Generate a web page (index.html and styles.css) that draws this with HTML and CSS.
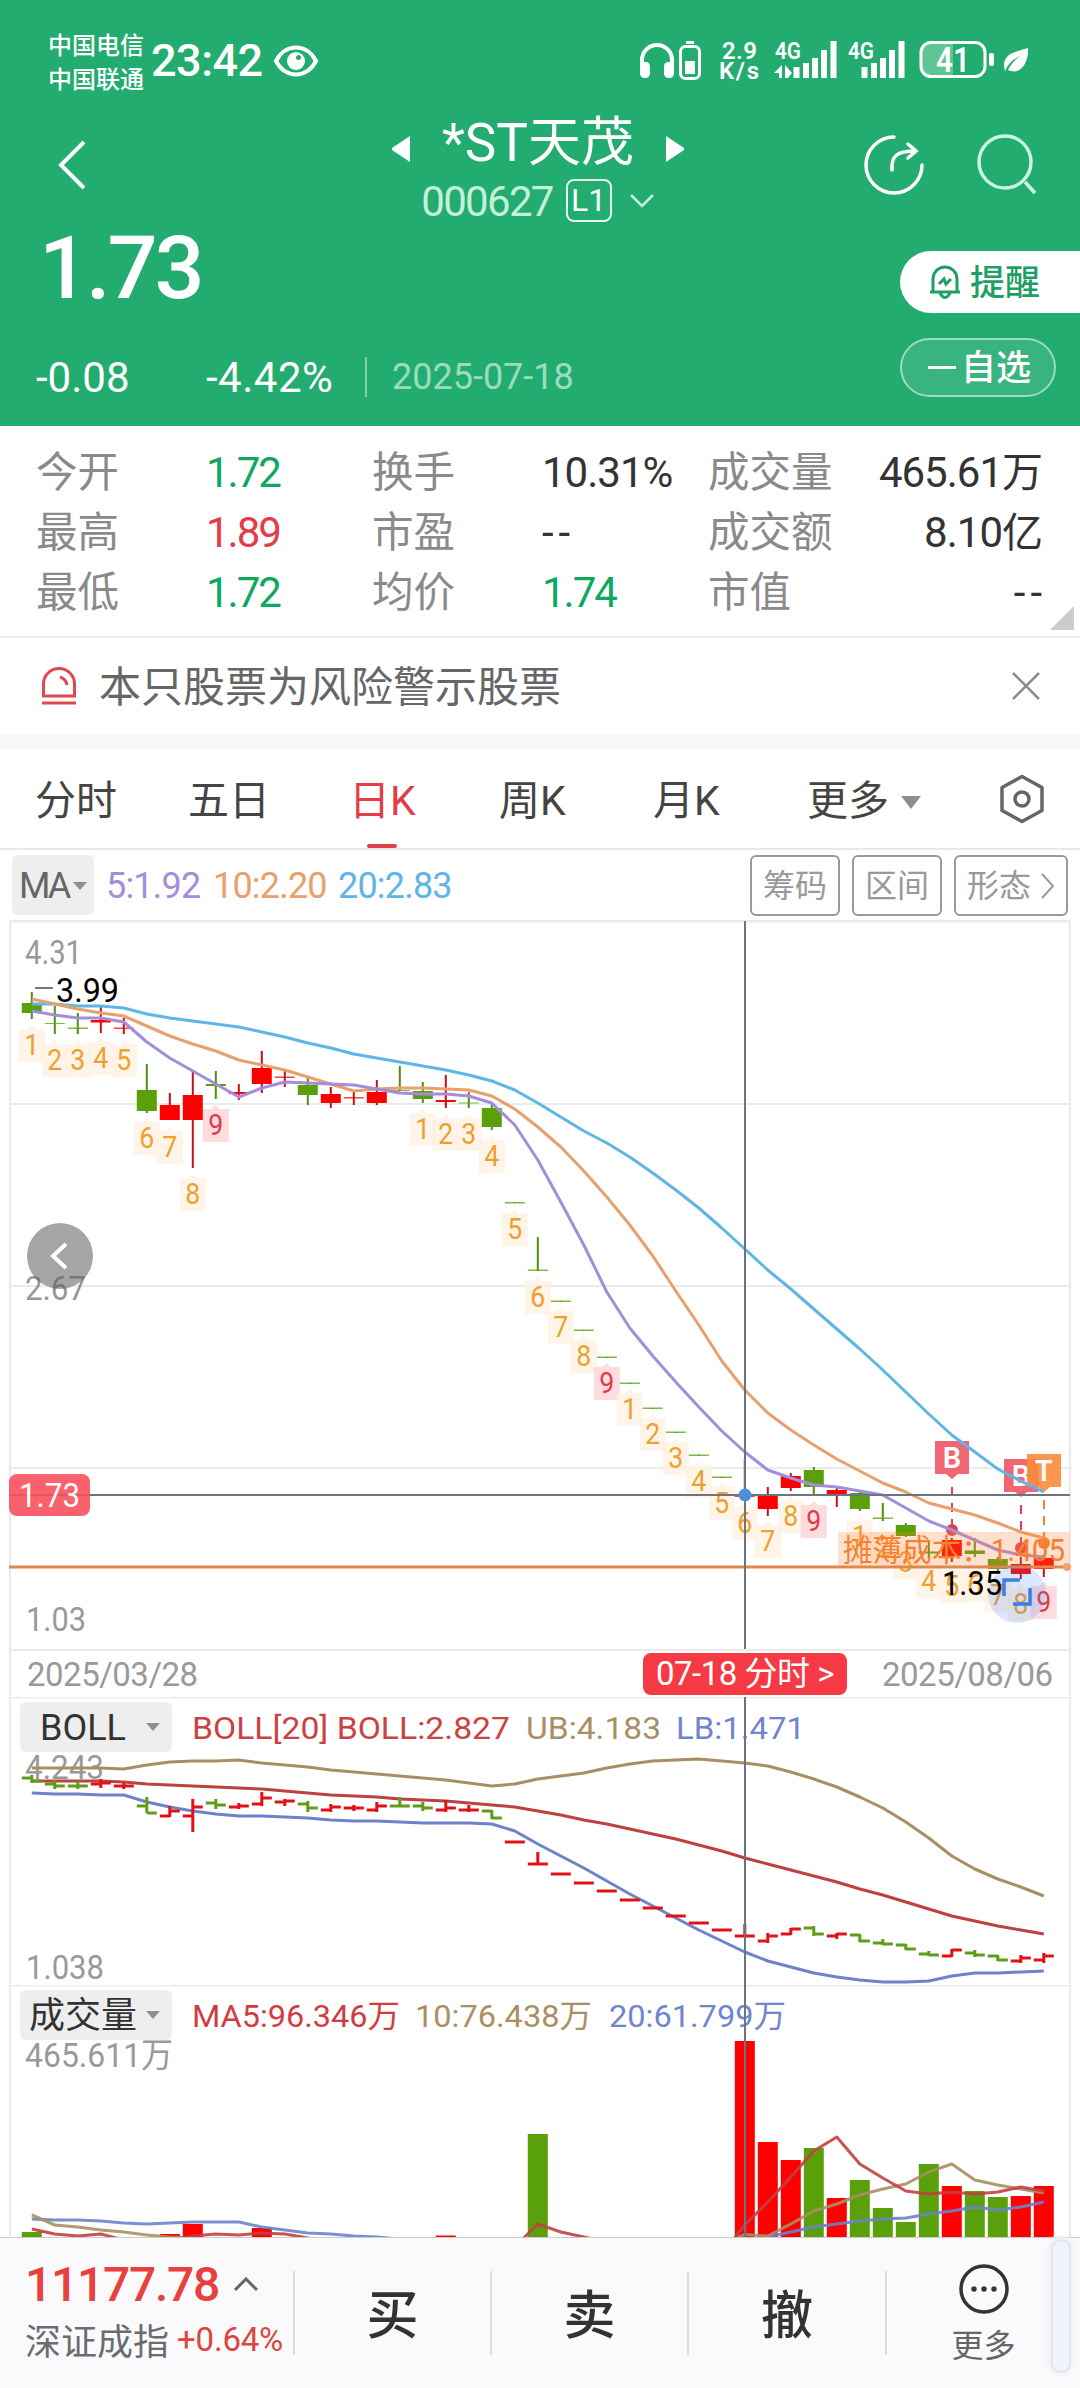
FILE: index.html
```html
<!DOCTYPE html>
<html lang="zh-CN">
<head>
    <meta charset="UTF-8">
    <meta name="viewport" content="width=device-width, initial-scale=1.0">
    <title>*ST天茂 000627</title>
    <link rel="stylesheet" href="styles.css">
</head>
<body>

    <!-- Header -->
    <header class="header">
        <div class="status-bar">
            <div class="carriers"><span>中国电信</span><span>中国联通</span></div>
            <span class="clock">23:42</span>
            <svg class="eye" width="46" height="34" viewBox="0 0 46 34">
                <path d="M3 17C12 -1 34 -1 43 17C34 35 12 35 3 17Z" fill="none" stroke="#fff" stroke-width="4"/>
                <circle cx="23" cy="17" r="9" fill="#fff"/>
                <circle cx="25.500" cy="13.500" r="2.500" fill="#22ac70"/>
            </svg>
            <svg class="status-icons" width="392" height="44" viewBox="640 38 392 44">
                <path d="M643 66V60A15 15 0 0 1 673 60V66" fill="none" stroke="#fff" stroke-width="4"/>
                <rect x="641" y="62" width="10" height="16" rx="4.500" fill="#fff"/>
                <rect x="665" y="62" width="10" height="16" rx="4.500" fill="#fff"/>
                <rect x="681.500" y="46.500" width="19" height="32" rx="5" fill="none" stroke="#fff" stroke-width="3"/>
                <rect x="687" y="41" width="8" height="3" fill="#fff"/>
                <rect x="686" y="61" width="10" height="13" fill="#fff"/>
                <g class="tiny">
                    <text x="723" y="58.500" textLength="35">2.9</text>
                    <text x="720" y="79" textLength="40">K/s</text>
                    <text x="776" y="59" textLength="26" lengthAdjust="spacingAndGlyphs">4G</text>
                    <text x="849" y="59" textLength="26" lengthAdjust="spacingAndGlyphs">4G</text>
                </g>
                <path d="M775 73L783 65V78H780V73ZM793 73L786 65V78H789Z" fill="#fff"/>
                <path d="M797.500 78V67M807 78V63M816 78V58M825 78V50M834.500 78V41" stroke="#fff" stroke-width="6"/>
                <path d="M865.500 78V67M875 78V63M884 78V58M893 78V50M902.500 78V41" stroke="#fff" stroke-width="6"/>
                <path d="M954 43H932Q923 43 923 52V67Q923 76 932 76H954Z" fill="#5fc496"/>
                <rect x="922" y="42.500" width="64" height="34" rx="10" fill="none" stroke="#fff" stroke-width="3"/>
                <text class="battery" x="937" y="72" textLength="34" lengthAdjust="spacingAndGlyphs">41</text>
                <rect x="990" y="53" width="5" height="13" rx="2" fill="#fff"/>
                <path d="M1006 71C1001 54 1016 52 1029 48C1030 62 1022 76 1009 70Q1013 62 1021 56Q1010 61 1006 71Z" fill="#fff"/>
            </svg>
        </div>

        <div class="nav">
            <svg class="back" width="30" height="52" viewBox="0 0 30 52"><path d="M26 3L3 26L26 49" fill="none" stroke="#fff" stroke-width="4"/></svg>
            <div class="nav-title">
                <div class="name-row">
                    <svg width="18" height="26" viewBox="0 0 18 26"><path d="M18 0V26L0 14V12Z" fill="#fff"/></svg>
                    <h1>*ST天茂</h1>
                    <svg width="18" height="26" viewBox="0 0 18 26"><path d="M0 0V26L18 14V12Z" fill="#fff"/></svg>
                </div>
                <div class="code-row">
                    <span class="code">000627</span>
                    <span class="level">L1</span>
                    <svg width="26" height="14" viewBox="0 0 26 14"><path d="M2 1L13 12L24 1" fill="none" stroke="#c4efda" stroke-width="2.500"/></svg>
                </div>
            </div>
            <div class="nav-actions">
                <svg width="62" height="62" viewBox="0 0 62 62" fill="none" stroke="#fff" stroke-width="3.500" stroke-linecap="round">
                    <path d="M31 3A28 28 0 1 0 59 31"/>
                    <path d="M29 36C28 22 34 17 52 17M45 10L53 17L45 24"/>
                </svg>
                <svg width="60" height="62" viewBox="0 0 60 62" fill="none" stroke="#c8f6de" stroke-width="3.500">
                    <circle cx="28" cy="28" r="26"/>
                    <path d="M48 48L58 59"/>
                </svg>
            </div>
        </div>

        <div class="quote">
            <div class="quote-main">
                <div class="price">1.73</div>
                <div class="change">
                    <span class="change-value">-0.08</span>
                    <span class="change-rate">-4.42%</span>
                    <span class="change-date">2025-07-18</span>
                </div>
            </div>
            <div class="quote-actions">
                <button class="remind">
                    <svg width="34" height="36" viewBox="0 0 34 36" fill="none" stroke="#1f9f66" stroke-width="3">
                        <path d="M2 28H32M5 28V15A12 12 0 0 1 29 15V28M12 29Q17 38 22 29"/>
                        <path d="M11 20L16 15L18 20L23 15"/>
                    </svg>
                    <span>提醒</span>
                </button>
                <button class="favorite"><i class="minus"></i><span>自选</span></button>
            </div>
        </div>
    </header>

    <!-- Quote details -->
    <section class="stats">
        <span class="label">今开</span><span class="down">1.72</span>
        <span class="label">换手</span><span>10.31%</span>
        <span class="label">成交量</span><span class="last">465.61<em>万</em></span>
        <span class="label">最高</span><span class="up">1.89</span>
        <span class="label">市盈</span><span class="empty">--</span>
        <span class="label">成交额</span><span class="last">8.10<em>亿</em></span>
        <span class="label">最低</span><span class="down">1.72</span>
        <span class="label">均价</span><span class="down">1.74</span>
        <span class="label">市值</span><span class="last empty">--</span>
        <i class="expand"></i>
    </section>

    <!-- Risk notice -->
    <section class="notice">
        <svg width="36" height="38" viewBox="0 0 36 38" fill="none" stroke="#e0474f" stroke-width="3">
            <path d="M2.500 29V17A15.500 15.500 0 0 1 33.500 17V29ZM1 36H35M19 10Q25 12 26 18"/>
        </svg>
        <p>本只股票为风险警示股票</p>
        <svg width="28" height="28" viewBox="0 0 28 28"><path d="M1 1L27 27M27 1L1 27" stroke="#8c8c8c" stroke-width="2.500"/></svg>
    </section>

    <!-- Period tabs -->
    <nav class="tabs">
        <a>分时</a>
        <a>五日</a>
        <a class="active">日K</a>
        <a>周K</a>
        <a>月K</a>
        <a>更多<i class="caret big"></i></a>
        <svg width="44" height="50" viewBox="0 0 44 50" fill="none" stroke="#666" stroke-width="3.500">
            <path d="M22 2.500L42 13.500V36.500L22 47.500L2 36.500V13.500Z" stroke-linejoin="round"/>
            <circle cx="22" cy="25" r="7"/>
        </svg>
    </nav>

    <!-- MA row -->
    <div class="indicator">
        <span class="ma-select">MA<i class="caret"></i></span>
        <span class="ma5">5:1.92</span>
        <span class="ma10">10:2.20</span>
        <span class="ma20">20:2.83</span>
        <div class="tools">
            <button>筹码</button>
            <button>区间</button>
            <button>形态<svg width="14" height="26" viewBox="0 0 14 26"><path d="M1 1L12 13L1 25" fill="none" stroke="#999" stroke-width="2"/></svg></button>
        </div>
    </div>

    <!-- Charts -->
    <svg class="chart" id="k-chart" width="1080" height="729" viewBox="0 920 1080 729"></svg>
    <div class="dates">
        <span>2025/03/28</span>
        <span class="date-badge">07-18 分时 &gt;</span>
        <span>2025/08/06</span>
    </div>
    <div class="panel">
        <div class="panel-head"><span class="select"><b>BOLL</b><i class="caret"></i></span></div>
        <svg class="chart" id="boll-chart" width="1080" height="288" viewBox="0 1697 1080 288"></svg>
    </div>
    <div class="panel">
        <div class="panel-head"><span class="select"><b>成交量</b><i class="caret"></i></span></div>
        <svg class="chart" id="vol-chart" width="1080" height="252" viewBox="0 1985 1080 252"></svg>
    </div>

    <!-- Bottom bar -->
    <footer class="bottom">
        <div class="index">
            <div class="index-value">11177.78
                <svg width="26" height="15" viewBox="0 0 26 15"><path d="M2 13L13 2L24 13" fill="none" stroke="#666" stroke-width="3"/></svg>
            </div>
            <div class="index-name">深证成指<span>+0.64%</span></div>
        </div>
        <a class="trade">买</a>
        <a class="trade">卖</a>
        <a class="trade">撤</a>
        <a class="more">
            <svg width="50" height="52" viewBox="0 0 50 52">
                <circle cx="25" cy="26" r="23" fill="none" stroke="#333" stroke-width="3.500"/>
                <circle cx="15" cy="26" r="2.700" fill="#333"/><circle cx="25" cy="26" r="2.700" fill="#333"/><circle cx="35" cy="26" r="2.700" fill="#333"/>
            </svg>
            更多
        </a>
        <i class="handle"></i>
    </footer>

    <script>
        const RED = '#ff0000', GREEN = '#5aa00a', CROSS = '#6a7580', GRID = '#ebebeb';
        const colX = i => 31.8 + i * 23;

        // [color, body top, body bottom, high, low]
        const candles = [
            ['g',1003,1013,992,1019],['g',1023,1024,1006,1034],['g',1027.5,1029,1013,1034],['r',1020,1022.5,1007,1033],['r',1027.5,1029,1018,1034],
            ['g',1090,1111,1064,1113],['r',1105,1120,1093,1120],['r',1095,1120,1072,1168],['g',1084,1086,1071,1099],['r',1092,1094,1084,1100],
            ['r',1068,1084,1051,1093],['r',1076.5,1078,1071,1087],['g',1085,1095,1077,1105],['r',1094,1103,1087,1108],['r',1097,1098.5,1090,1105],
            ['r',1092,1103,1080,1105],['g',1090,1091,1066,1091],['g',1091,1099,1082,1103],['r',1100,1102,1075,1108],['g',1102.5,1103.5,1092,1108],
            ['g',1108,1127,1103,1130],['g',1202,1203.5,1202,1203],['g',1269.5,1271,1237,1271],['g',1300.5,1302,1301,1302],['g',1329.5,1331,1330,1331],
            ['g',1356.5,1358,1357,1358],['g',1382.5,1384,1383,1384],['g',1407.5,1409,1408,1409],['g',1431.5,1433,1432,1433],['g',1454.5,1456,1455,1456],
            ['g',1476.5,1478,1477,1478],['r',1495.5,1497,1459,1497],['r',1496,1509,1487,1516],['r',1476,1488,1473,1491],['g',1470,1487,1467,1494],
            ['r',1490,1496,1488,1507],['g',1493,1509,1492,1511],['g',1517.5,1519,1503,1521],['g',1525,1536,1523,1537],['g',1551.5,1553.5,1540,1558],
            ['r',1540,1556,1538,1562],['g',1550.5,1554,1538,1557],['g',1559,1569,1557,1571],['r',1564,1574,1557,1579],['r',1558,1569,1555,1577]
        ];

        const ma5 = [1011,1015,1018,1018,1022,1042,1058,1071,1084,1097,1088,1082,1083,1084,1085,1089,1093,1094,1094,1096,1103,1125,1160,1202,1245,1292,1328,1356,1382,1407,1431,1452,1470,1478,1485,1487,1491,1495,1508,1521,1530,1540,1550,1555,1557];
        const ma10 = [999,1004,1009,1013,1016,1026,1036,1044,1051,1060,1065,1070,1077,1084,1091,1089,1088,1088,1089,1090,1096,1109,1127,1147,1171,1197,1225,1256,1291,1325,1361,1390,1413,1430,1445,1459,1471,1483,1492,1503,1509,1515,1523,1532,1538];
        const ma20 = [1004,1004,1006,1006,1008,1014,1018,1021,1024,1027,1032,1037,1043,1048,1054,1058,1062,1066,1070,1075,1081,1090,1103,1117,1131,1143,1157,1173,1190,1208,1228,1249,1270,1289,1309,1329,1349,1370,1392,1414,1435,1452,1469,1481,1492];

        // [column, count, box top]
        const counts = [
            [0,1,1029],[1,2,1044],[2,3,1044],[3,4,1042],[4,5,1044],[5,6,1122],[6,7,1131],[7,8,1178],[8,9,1109],
            [17,1,1113],[18,2,1118],[19,3,1118],[20,4,1140],[21,5,1213],[22,6,1281],[23,7,1311],[24,8,1340],[25,9,1367],
            [26,1,1393],[27,2,1418],[28,3,1442],[29,4,1465],[30,5,1487],[31,6,1507],[32,7,1525],[33,8,1500],[34,9,1505],
            [36,1,1520],[37,2,1531],[38,3,1546],[39,4,1565],[40,5,1570],[41,6,1569],[42,7,1579],[43,8,1588],[44,9,1586]
        ];

        const bollMid = [1781,1781,1781,1781,1782,1784,1785,1786,1787,1788,1789,1791,1793,1795,1796,1797,1799,1800,1801,1803,1805,1807,1811,1815,1820,1824,1829,1834,1839,1845,1851,1858,1864,1870,1876,1882,1889,1895,1902,1909,1916,1921,1926,1930,1934];
        const bollUp = [1768,1768,1768,1768,1769,1765,1762,1761,1761,1760,1763,1765,1767,1770,1772,1774,1776,1778,1780,1783,1786,1784,1779,1776,1773,1768,1764,1761,1760,1759,1761,1763,1766,1772,1779,1787,1797,1808,1822,1838,1856,1869,1879,1887,1896];
        const bollLow = [1793,1794,1794,1795,1795,1802,1807,1811,1814,1816,1816,1817,1818,1820,1821,1821,1822,1823,1823,1823,1824,1831,1844,1856,1868,1881,1894,1906,1918,1930,1941,1952,1961,1967,1973,1977,1980,1982,1982,1981,1976,1973,1973,1972,1971];

        // [color, open, close, high, low]
        const bars = [
            ['g',1778,1781,1775,1783],['g',1784,1786,1780,1789],['g',1786,1786,1781,1789],['r',1784,1783,1779,1788],['r',1786,1786,1783,1789],
            ['g',1806,1813,1797,1813],['r',1816,1811,1806,1817],['r',1816,1807,1799,1832],['g',1803,1805,1799,1809],['r',1807,1806,1803,1809],
            ['r',1804,1798,1792,1806],['r',1802,1801,1799,1806],['g',1804,1808,1801,1812],['r',1810,1807,1804,1812],['r',1808,1808,1805,1811],
            ['r',1810,1806,1802,1812],['g',1806,1806,1797,1807],['g',1806,1808,1802,1811],['r',1810,1808,1800,1812],['r',1810,1810,1805,1812],
            ['g',1811,1818,1810,1819],['r',1842,1842,1841,1843],['r',1864,1864,1852,1865],['r',1874,1874,1873,1875],['r',1883,1883,1882,1884],
            ['r',1891,1891,1890,1892],['r',1900,1900,1899,1901],['r',1908,1908,1907,1909],['r',1916,1916,1915,1917],['r',1923,1923,1922,1924],
            ['r',1930,1930,1929,1931],['r',1936,1936,1924,1937],['r',1941,1936,1933,1943],['r',1934,1929,1928,1935],['g',1928,1934,1926,1936],
            ['r',1936,1934,1933,1939],['g',1935,1941,1934,1942],['g',1943,1944,1939,1945],['g',1945,1949,1944,1950],['g',1954,1955,1951,1956],
            ['r',1956,1950,1949,1957],['g',1953,1955,1950,1957],['g',1956,1960,1955,1961],['r',1961,1958,1955,1963],['r',1960,1956,1953,1963]
        ];

        // column: [color, top]
        const volumes = {
            0:['g',2232],6:['r',2234],7:['r',2224],10:['r',2228],18:['r',2235.5],22:['g',2134],31:['r',2041],32:['r',2142],33:['r',2160],34:['g',2148],
            35:['r',2198],36:['g',2180],37:['g',2208],38:['g',2222],39:['g',2164],40:['r',2186],41:['g',2191],42:['g',2197],43:['r',2196],44:['r',2186]
        };
        const vol5 = [2229,2234,2236,2234,2240,2241,2240,2236,2234,2235,2233,2234,2238,2242,2244,2244,2244,2244,2244,2244,2246,2247,2224,2232,2237,2242,2246,2250,2250,2250,2254,2225,2202,2177,2151,2137,2164,2178,2191,2194,2192,2194,2192,2187,2191];
        const vol10 = [2215,2225,2227,2230,2232,2235,2237,2238,2240,2240,2240,2242,2244,2244,2244,2244,2244,2244,2244,2244,2244,2244,2244,2244,2244,2244,2244,2244,2244,2244,2244,2234.5,2236,2224,2211,2204,2195,2189,2184,2172,2164,2180,2185,2189,2193];
        const vol20 = [2219,2220,2220,2221,2223,2224,2223,2222,2222,2222,2227,2230,2233,2234,2236,2237,2239,2240,2242,2242,2242,2242,2242,2242,2242,2242,2242,2242,2242,2242,2242,2242,2237,2232,2227,2224,2221,2219,2218,2214,2211,2207,2210,2207,2202];

        const color = c => c === 'r' ? RED : GREEN;
        const line = (x1, y1, x2, y2, c, w = 2) => `<line x1="${x1}" y1="${y1}" x2="${x2}" y2="${y2}" stroke="${c}" stroke-width="${w}"/>`;
        const rect = (x, y, w, h, c, r = 0) => `<rect x="${x}" y="${y}" width="${w}" height="${h}" rx="${r}" fill="${c}"/>`;
        const curve = (data, c, o = 1) => `<polyline points="${data.map((y, i) => colX(i).toFixed(1) + ',' + y).join(' ')}" fill="none" stroke="${c}" stroke-width="3" stroke-opacity="${o}" stroke-linejoin="round"/>`;
        const text = (s, x, y, w, c, size = 34) => `<text x="${x}" y="${y}" fill="${c}" font-size="${size}" textLength="${w}" lengthAdjust="spacingAndGlyphs">${s}</text>`;
        const frame = (top, bottom) => line(10, top, 10, bottom, GRID) + line(1070, top, 1070, bottom, GRID);

        function countLabel([i, n, top]) {
            const x = colX(i), nine = n === 9;
            const bg = nine ? '#fdd3d8' : '#fff1e2';
            return `<g><path d="M${x - 13} ${top}H${x - 4}L${x} ${top - 4}L${x + 4} ${top}H${x + 13}V${top + 33}H${x - 13}Z" fill="${bg}" fill-opacity="0.8"/>` +
                `<text class="count" x="${x - 7.500}" y="${top + 26}" textLength="15" lengthAdjust="spacingAndGlyphs" fill="${nine ? '#dd3b48' : '#eea02f'}">${n}</text></g>`;
        }

        function flag(letter, x, top, c, dotY, dotColor) {
            return line(x, top + 46, x, dotY, dotColor, 2).replace('/>', ' stroke-dasharray="9 7"/>') +
                `<circle cx="${x}" cy="${dotY}" r="6" fill="${dotColor}"/>` +
                `<path d="M${x - 17} ${top}H${x + 17}V${top + 33}H${x + 6}L${x} ${top + 38}L${x - 6} ${top + 33}H${x - 17}Z" fill="${c}" fill-opacity="0.9"/>` +
                `<text class="flag" x="${x}" y="${top + 27}">${letter}</text>`;
        }

        function drawK() {
            let s = line(9, 921, 1071, 921, GRID, 3) + frame(921, 1649);
            [1104, 1286, 1468].forEach(y => s += line(10, y, 1070, y, GRID));
            s += text('4.31', 25, 964, 57, '#999') + text('1.03', 26, 1631, 60, '#999');
            s += counts.map(countLabel).join('');
            candles.forEach(([c, top, bottom, high, low], i) => {
                const x = colX(i), thin = bottom - top < 2;
                s += line(x, high, x, low, c === 'r' ? '#c41015' : '#4f9010');
                s += `<rect x="${x - 10}" y="${top}" width="20" height="${bottom - top}" fill="${color(c)}" fill-opacity="${thin ? 0.75 : 1}"/>`;
            });
            s += line(35, 988, 53, 988, '#777') + text('3.99', 56, 1002, 63, '#000');
            s += flag('B', 952, 1441, '#ee5563', 1530, '#dc4455');
            s += flag('B', 1021, 1459, '#ee5563', 1548, '#dc4455');
            s += flag('T', 1044, 1454, '#fb8b3c', 1543, '#ee8433');
            s += curve(ma20, '#5fb5e5') + curve(ma10, '#e8a06c') + curve(ma5, '#a48ddb');
            s += rect(838, 1532, 232, 34, 'rgba(255,130,60,0.25)');
            s += text('摊薄成本：1.405', 843, 1561, 222, '#f5812f', 31);
            s += line(9, 1567, 1070, 1567, '#e0874c', 3) + '<circle cx="1067" cy="1567" r="4" fill="#f3a170"/>';
            s += '<circle cx="1017" cy="1594" r="29" fill="#4a86ee" fill-opacity="0.2"/>';
            s += text('1.35', 942, 1595, 60, '#000');
            s += '<path d="M1004 1596V1580H1020M1030 1588V1604H1013" fill="none" stroke="#3b7fe8" stroke-width="3.5"/>';
            s += '<circle cx="60" cy="1256" r="33" fill="#9e9e9e" fill-opacity="0.93"/><path d="M66 1244L53 1256L66 1268" fill="none" stroke="#fff" stroke-width="4"/>';
            s += text('2.67', 25, 1300, 61, 'rgba(90,90,90,0.65)');
            s += line(9, 1495, 1070, 1495, CROSS) + line(745, 921, 745, 1649, CROSS);
            s += rect(9, 1474, 81, 42, 'rgba(248,80,92,0.9)', 8) + text('1.73', 19, 1507, 61, '#fff');
            s += '<circle cx="745" cy="1495" r="6.5" fill="#4a90dc"/>';
            document.getElementById('k-chart').innerHTML = s;
        }

        function drawBoll() {
            let s = line(10, 1697.5, 1070, 1697.5, GRID) + frame(1697, 1985);
            s += text('BOLL[20] BOLL:2.827', 192, 1739, 318, '#cb4243', 32) + text('UB:4.183', 526, 1739, 135, '#aa8f63', 32) + text('LB:1.471', 676, 1739, 129, '#6f86cf', 32);
            s += text('4.243', 25, 1779, 79, '#999') + text('1.038', 26, 1979, 78, '#999');
            s += curve(bollLow, '#6c83c9') + curve(bollMid, '#bd4141') + curve(bollUp, '#a88f62');
            bars.forEach(([c, open, close, high, low], i) => {
                const x = colX(i), k = c === 'r' ? '#e01218' : '#5f9c18';
                s += line(x, high, x, low, k, 3) + line(x - 10, open, x, open, k, 3) + line(x, close, x + 10, close, k, 3);
            });
            s += line(745, 1697, 745, 1985, CROSS);
            document.getElementById('boll-chart').innerHTML = s;
        }

        function drawVolume() {
            let s = line(10, 1985.5, 1070, 1985.5, GRID) + frame(1985, 2237);
            s += text('MA5:96.346万', 192, 2027, 208, '#d23c3f', 32) + text('10:76.438万', 415, 2027, 177, '#aa8f63', 32) + text('20:61.799万', 609, 2027, 177, '#6f86cf', 32);
            s += text('465.611万', 25, 2067, 148, '#999');
            Object.entries(volumes).forEach(([i, [c, top]]) => s += rect(colX(+i) - 10, top, 20, 2237 - top, color(c)));
            s += curve(vol20, '#6c83c9', 0.9) + curve(vol10, '#a88f62', 0.9) + curve(vol5, '#c2403f', 0.9);
            s += line(745, 1985, 745, 2237, CROSS);
            document.getElementById('vol-chart').innerHTML = s;
        }

        drawK();
        drawBoll();
        drawVolume();
    </script>
</body>
</html>
```
FILE: styles.css
```css
* {
    box-sizing: border-box;
}

body {
    margin: 0;
    width: 1080px;
    background: #fff;
    color: #333;
    font-family: Roboto, "Noto Sans CJK SC", sans-serif;
    overflow-x: hidden;
}

svg {
    display: block;
    flex: none;
}

em, i {
    font-style: normal;
}

button {
    font-family: inherit;
    border: none;
    margin: 0;
    padding: 0;
}

/* Header */
.header {
    height: 426px;
    background: #22ac70;
    color: #fff;
}

.status-bar {
    display: flex;
    align-items: center;
    height: 100px;
    padding: 22px 48px 0 48px;
}

.carriers {
    display: flex;
    flex-direction: column;
    font-size: 24px;
    line-height: 34px;
    font-weight: 500;
    margin-right: 7px;
    padding-top: 4px;
}

.clock {
    font-size: 45px;
    font-weight: 500;
    line-height: 50px;
    width: 122px;
    letter-spacing: -0.5px;
}

.eye {
    margin-top: -1px;
}

.status-icons {
    margin-left: auto;
    margin-right: 1px;
    margin-top: -2px;
    overflow: visible;
}

.tiny {
    font-size: 24px;
    font-weight: 600;
    fill: #fff;
}

.battery {
    font-size: 35px;
    font-weight: 600;
    fill: #fff;
}

.nav {
    display: grid;
    grid-template-columns: 298px 480px 302px;
    height: 125px;
}

.back {
    margin: 39px 0 0 58px;
}

.nav-title {
    display: flex;
    flex-direction: column;
    align-items: center;
}

.name-row {
    display: flex;
    align-items: center;
    gap: 32px;
    height: 76px;
    padding-top: 10px;
}

.name-row h1 {
    margin: 0;
    font-size: 53px;
    font-weight: 400;
    line-height: 60px;
}

.name-row svg {
    margin-top: 12px;
}

.code-row {
    display: flex;
    align-items: center;
    height: 50px;
}

.code {
    font-size: 42px;
    letter-spacing: -1.7px;
    color: #c4efda;
}

.level {
    width: 46px;
    height: 43px;
    margin: -2px 17px 0 13px;
    border: 2.5px solid #e6f9ef;
    border-radius: 8px;
    font-size: 32px;
    line-height: 39px;
    text-align: center;
}

.nav-actions {
    display: flex;
    gap: 52px;
    padding: 34px 0 0 85px;
}

.quote {
    display: flex;
    justify-content: space-between;
}

.price {
    height: 112px;
    padding-left: 39px;
    font-size: 88px;
    font-weight: 500;
    line-height: 86px;
    letter-spacing: -3px;
}

.change {
    display: flex;
    align-items: center;
    padding: 18px 0 0 36px;
    font-size: 42px;
    height: 62px;
}

.change-value {
    width: 170px;
}

.change-rate {
    width: 161px;
    height: 40px;
    line-height: 42px;
    border-right: 2px solid #7fd0aa;
    letter-spacing: 0.5px;
}

.change-date {
    padding-left: 25px;
    font-size: 36px;
    color: #9bdcbe;
}

.quote-actions {
    width: 180px;
    padding-top: 26px;
}

.remind {
    display: flex;
    align-items: center;
    gap: 8px;
    width: 180px;
    height: 62px;
    padding-left: 28px;
    border-radius: 31px 0 0 31px;
    background: #fff;
    color: #1f9f66;
    font-size: 35px;
    font-weight: 500;
    line-height: 60px;
}

.remind span, .favorite span {
    padding-top: 3px;
}

.favorite {
    display: flex;
    align-items: center;
    gap: 5px;
    width: 156px;
    height: 59px;
    margin-top: 25px;
    padding-left: 26px;
    border: 2px solid #9bdcbe;
    border-radius: 30px;
    background: #3ab47f;
    color: #fff;
    font-size: 35px;
    font-weight: 500;
    line-height: 52px;
}

.minus {
    width: 28px;
    height: 3px;
    background: #fff;
}

/* Quote details */
.stats {
    position: relative;
    display: grid;
    grid-template-columns: 170px 166px 170px 166px 120px 1fr;
    grid-auto-rows: 60px;
    height: 212px;
    padding: 17px 37px 0 36px;
    border-bottom: 2px solid #ebebeb;
    font-size: 42px;
    line-height: 60px;
    letter-spacing: -1px;
    white-space: nowrap;
}

.stats .label {
    color: #8a8a8a;
    font-size: 41.5px;
    letter-spacing: 0;
}

.stats .last {
    text-align: right;
}

.stats .down, .stats .up {
    letter-spacing: -2px;
}

.stats .empty {
    letter-spacing: 5px;
    margin-right: -4px;
}

.stats em {
    letter-spacing: 0;
    font-size: 41px;
}

.up {
    color: #e23d48;
}

.down {
    color: #0fa860;
}

.expand {
    position: absolute;
    right: 6px;
    bottom: 6px;
    border-style: solid;
    border-width: 0 0 24px 24px;
    border-color: transparent transparent #ccc transparent;
}

/* Risk notice */
.notice {
    display: flex;
    align-items: center;
    height: 111px;
    padding: 0 40px 0 41px;
    border-bottom: 15px solid #f7f7f7;
}

.notice p {
    flex: 1;
    margin: 0 0 0 22px;
    padding-top: 3px;
    color: #666;
    font-size: 42px;
    line-height: 60px;
}

/* Period tabs */
.tabs {
    display: grid;
    grid-template-columns: 153px 161px 150px 154px 154px 193px 1fr;
    align-items: center;
    height: 101px;
    padding-left: 35px;
    border-bottom: 2px solid #e8e8e8;
    font-size: 41px;
    line-height: 99px;
    color: #444;
}

.tabs a {
    height: 99px;
    padding-top: 3px;
}

.tabs .active {
    position: relative;
    color: #e33e48;
}

.tabs .active::after {
    content: "";
    position: absolute;
    left: 18px;
    bottom: 0;
    width: 30px;
    height: 4px;
    border-radius: 2px;
    background: #e0404a;
}

.caret {
    display: inline-block;
    border-style: solid;
    border-width: 8px 7px 0 7px;
    border-color: #8f8f8f transparent transparent transparent;
}

.caret.big {
    margin: 0 0 6px 12px;
    border-width: 13px 10.5px 0 10.5px;
}

/* MA row */
.indicator {
    display: flex;
    align-items: center;
    height: 70px;
    padding: 0 12px;
    font-size: 36px;
    line-height: 60px;
    letter-spacing: -0.8px;
    white-space: nowrap;
}

.indicator > span {
    padding-top: 2px;
}

.indicator .ma-select {
    display: flex;
    align-items: center;
    width: 82px;
    height: 60px;
    padding-left: 7px;
    border-radius: 6px;
    background: #eee;
    color: #666;
    letter-spacing: -3px;
}

.ma-select .caret {
    margin-left: 5px;
}

.ma5 {
    margin-left: 12px;
    width: 107px;
    color: #a48ddb;
}

.ma10 {
    width: 125px;
    color: #e8a06c;
}

.ma20 {
    color: #5fb5e5;
}

.tools {
    display: flex;
    gap: 12px;
    margin-left: auto;
}

.tools button {
    display: flex;
    align-items: center;
    justify-content: center;
    gap: 10px;
    min-width: 90px;
    height: 61px;
    padding: 2px 11px 0;
    border: 2px solid #999;
    border-radius: 6px;
    background: #fff;
    color: #999;
    font-size: 32px;
    line-height: 56px;
}

/* Charts */
.chart text {
    font-family: Roboto, "Noto Sans CJK SC", sans-serif;
}

.chart .count {
    font-size: 30px;
}

.chart .flag {
    font-size: 29px;
    font-weight: 600;
    fill: #fff;
    text-anchor: middle;
}

.dates {
    display: grid;
    grid-template-columns: 634px 221px 1fr;
    align-items: center;
    height: 48px;
    margin: 0 9px;
    padding-left: 16px;
    border: 2px solid #ebebeb;
    border-bottom: none;
    color: #999;
    font-size: 33px;
    letter-spacing: -0.5px;
}

.date-badge {
    width: 204px;
    height: 42px;
    margin-left: -18px;
    border-radius: 8px;
    background: #f63a45;
    color: #fff;
    font-size: 33px;
    line-height: 42px;
    text-align: center;
    white-space: nowrap;
}

.panel {
    display: grid;
}

.panel > * {
    grid-area: 1 / 1;
}

.panel-head {
    padding: 5px 0 0 20px;
}

.select {
    display: flex;
    align-items: center;
    width: 152px;
    height: 50px;
    border-radius: 6px;
    background: #eee;
    font-size: 36px;
    line-height: 50px;
}

.select b {
    width: 126px;
    padding-top: 2px;
    font-weight: 400;
    text-align: center;
}

/* Bottom bar */
.bottom {
    position: relative;
    display: grid;
    grid-template-columns: 293px 197px 197px 198px 1fr;
    height: 151px;
    border-top: 1px solid #ccc;
    background: #fafafc;
}

.index {
    padding: 18px 0 0 25px;
    white-space: nowrap;
}

.index-value {
    display: flex;
    align-items: center;
    gap: 14px;
    height: 56px;
    color: #e8403c;
    font-size: 48px;
    font-weight: 500;
    letter-spacing: -1.3px;
}

.index-name {
    display: flex;
    align-items: center;
    height: 54px;
    color: #6a6c72;
    font-size: 36px;
}

.index-name span {
    margin-left: 8px;
    color: #dd4440;
    font-size: 33px;
    letter-spacing: -0.2px;
}

.trade, .more {
    height: 84px;
    margin-top: 33px;
    border-left: 2px solid #dcdcde;
}

.trade {
    padding-top: 4px;
    color: #333;
    font-size: 52px;
    font-weight: 500;
    line-height: 84px;
    text-align: center;
}

.more {
    display: flex;
    flex-direction: column;
    align-items: center;
    color: #666;
    font-size: 32px;
    line-height: 44px;
}

.more svg {
    margin: -8px 0 9px;
}

.handle {
    position: absolute;
    right: 9px;
    top: 1px;
    width: 20px;
    height: 134px;
    border: 2px solid #e4e4e8;
    border-radius: 10px;
    background: #f0f4fd;
    box-shadow: 0 0 4px 3px #f1f1f4;
}
```
